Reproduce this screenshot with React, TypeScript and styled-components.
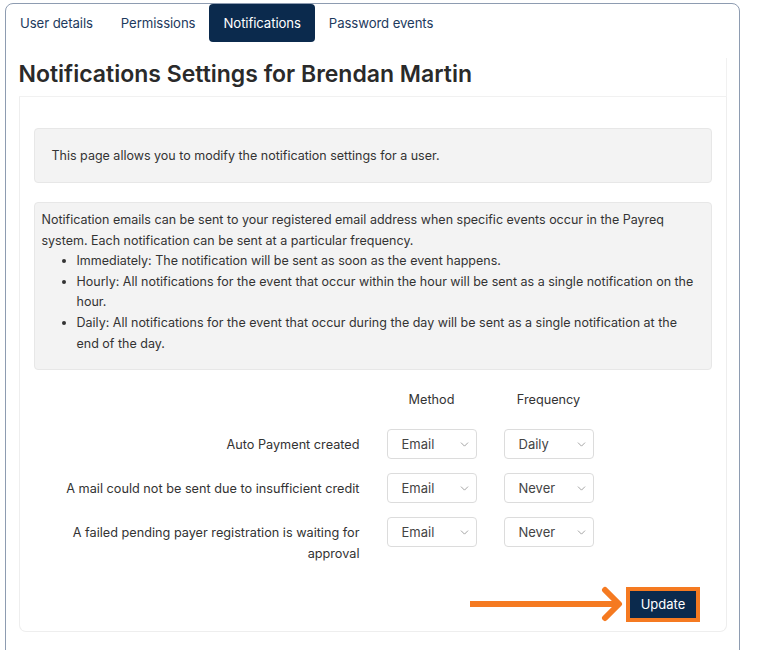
import React from 'react';
import styled, { createGlobalStyle } from 'styled-components';
import { ChevronDown } from 'lucide-react';

const colors = {
  navy: '#0b2a4d',
  tabText: '#1d3a5e',
  text: '#333333',
  heading: '#2a2a2a',
  panel: '#f3f3f3',
  panelBorder: '#e7e7e7',
  orange: '#f57a21',
};

const GlobalStyle = createGlobalStyle`
  body {
    margin: 0;
    background: #ffffff;
    font-family: Inter, "Liberation Sans", Arial, sans-serif;
    color: ${colors.text};
  }
`;

const rows = [
  { label: 'Auto Payment created', method: 'Email', frequency: 'Daily' },
  { label: 'A mail could not be sent due to insufficient credit', method: 'Email', frequency: 'Never' },
  { label: 'A failed pending payer registration is waiting for approval', method: 'Email', frequency: 'Never' },
];

const Select: React.FC<{ value: string; options: string[] }> = ({ value, options }) => (
  <SelectWrap>
    <NativeSelect defaultValue={value}>
      {options.map((o) => (
        <option key={o}>{o}</option>
      ))}
    </NativeSelect>
    <Chevron>
      <ChevronDown size={13} strokeWidth={1.4} />
    </Chevron>
  </SelectWrap>
);

export default function App() {
  return (
    <>
      <GlobalStyle />
      <Frame>
        <Tabs>
          <Tab>User details</Tab>
          <Tab>Permissions</Tab>
          <Tab active>Notifications</Tab>
          <Tab>Password events</Tab>
        </Tabs>
        <Card>
          <CardHeader>
            <Title>Notifications Settings for Brendan Martin</Title>
          </CardHeader>
          <CardBody>
            <IntroBox>This page allows you to modify the notification settings for a user.</IntroBox>
            <HelpBox>
              Notification emails can be sent to your registered email address when specific events occur in the Payreq
              system. Each notification can be sent at a particular frequency.
              <BulletList>
                <li>Immediately: The notification will be sent as soon as the event happens.</li>
                <li>Hourly: All notifications for the event that occur within the hour will be sent as a single notification on the hour.</li>
                <li>Daily: All notifications for the event that occur during the day will be sent as a single notification at the end of the day.</li>
              </BulletList>
            </HelpBox>
            <SettingsGrid>
              <span />
              <ColumnHead>Method</ColumnHead>
              <ColumnHead>Frequency</ColumnHead>
              {rows.map((r) => (
                <React.Fragment key={r.label}>
                  <RowLabel>{r.label}</RowLabel>
                  <Select value={r.method} options={['Email', 'SMS']} />
                  <Select value={r.frequency} options={['Immediately', 'Hourly', 'Daily', 'Never']} />
                </React.Fragment>
              ))}
            </SettingsGrid>
            <Footer>
              <svg width="154" height="36" viewBox="0 0 154 36">
                <line x1="0" y1="18" x2="148" y2="18" stroke={colors.orange} strokeWidth="6" />
                <polyline
                  points="135,4 149,18 135,32"
                  fill="none"
                  stroke={colors.orange}
                  strokeWidth="6"
                  strokeLinecap="round"
                  strokeLinejoin="round"
                />
              </svg>
              <UpdateButton>Update</UpdateButton>
            </Footer>
          </CardBody>
        </Card>
      </Frame>
    </>
  );
}

const Frame = styled.div`
  margin: 3px 32px 0 5px;
  height: 660px;
  border: 1.5px solid #8e9cb1;
  border-radius: 8px;
  box-sizing: border-box;
  padding: 0 12px 0 0;
`;

const Tabs = styled.div`
  display: flex;
`;

const Tab = styled.div<{ active?: boolean }>`
  height: 38px;
  display: flex;
  align-items: center;
  padding: 0 14px;
  font-size: 13.2px;
  letter-spacing: -0.1px;
  border-radius: 4px;
  color: ${(p) => (p.active ? '#ffffff' : colors.tabText)};
  background: ${(p) => (p.active ? colors.navy : 'transparent')};
`;

const Card = styled.div`
  margin: 16px 0 0 12.5px;
`;

const CardHeader = styled.div`
  border-right: 1px solid #f1f1f1;
  border-bottom: 1px solid #f1f1f1;
  height: 38px;
`;

const Title = styled.h1`
  margin: 0;
  font-size: 23px;
  font-weight: 600;
  line-height: 32px;
  color: ${colors.heading};
`;

const CardBody = styled.div`
  border: 1px solid #eeeeee;
  border-top: none;
  border-radius: 0 0 7px 7px;
  padding: 31px 14px 9px 14px;
  display: flex;
  flex-direction: column;
`;

const InfoPanel = styled.div`
  background: ${colors.panel};
  border: 1px solid ${colors.panelBorder};
  border-radius: 4px;
  font-size: 12.5px;
  color: ${colors.text};
`;

const IntroBox = styled(InfoPanel)`
  height: 55px;
  box-sizing: border-box;
  display: flex;
  align-items: center;
  padding: 0 17px;
`;

const HelpBox = styled(InfoPanel)`
  margin-top: 19px;
  padding: 7px 13px 15px 7px;
  line-height: 20.6px;
`;

const BulletList = styled.ul`
  margin: 0;
  padding-left: 35px;
`;

const SettingsGrid = styled.div`
  display: grid;
  grid-template-columns: 326px 90px 90px;
  column-gap: 27px;
  row-gap: 14px;
  margin-top: 20px;
  font-size: 12.7px;
`;

const ColumnHead = styled.div`
  text-align: center;
  line-height: 20px;
  margin-bottom: 5px;
`;

const RowLabel = styled.div`
  text-align: right;
  line-height: 20.5px;
  padding-top: 6px;
`;

const SelectWrap = styled.div`
  position: relative;
  height: 30px;
`;

const NativeSelect = styled.select`
  appearance: none;
  width: 100%;
  height: 30px;
  border: 1px solid #dcdcdc;
  border-radius: 4px;
  background: #ffffff;
  padding: 0 14px;
  font-family: inherit;
  font-size: 13px;
  color: #444444;
`;

const Chevron = styled.span`
  position: absolute;
  right: 6px;
  top: 9px;
  color: #888888;
  pointer-events: none;
  display: flex;
`;

const Footer = styled.div`
  display: flex;
  align-items: center;
  justify-content: flex-end;
  gap: 6px;
  margin-top: 22px;
  padding-right: 16px;
`;

const UpdateButton = styled.button`
  background: ${colors.navy};
  color: #ffffff;
  border: none;
  outline: 4px solid ${colors.orange};
  font-family: inherit;
  font-size: 13px;
  height: 27px;
  width: 66px;
  padding: 0;
`;
